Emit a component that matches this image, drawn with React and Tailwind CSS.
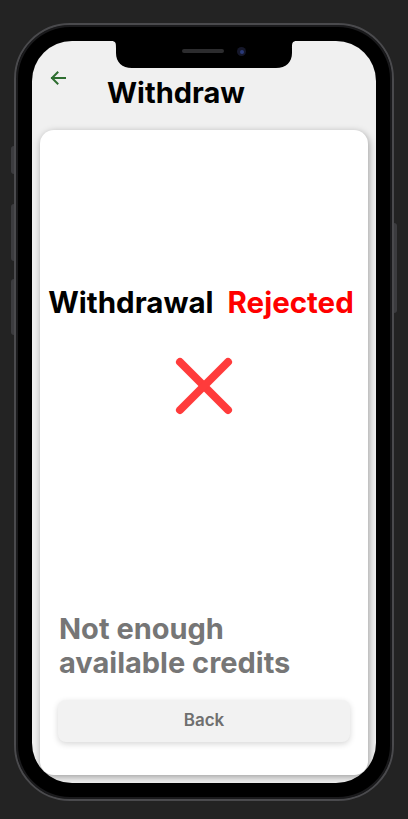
import React from 'react';

// 刘海（含肩部弧线）
const Notch = () => (
    <div className="absolute top-0 left-[79px] w-[186px] h-[28px]">
        <svg width="186" height="28" viewBox="0 0 186 28" className="absolute inset-0">
            <path d="M0 0 C5 0 5 2 5 8 V12 C5 21 11 27 21 27 H165 C175 27 181 21 181 12 V8 C181 2 181 0 186 0 Z" fill="#000" />
        </svg>
        <div className="absolute top-[8px] left-[71px] w-[42px] h-[4px] rounded-full bg-[#2c2c2e]" />
        <div className="absolute top-[6px] left-[126px] w-[9px] h-[9px] rounded-full bg-[#15172a] flex items-center justify-center">
            <div className="w-[4px] h-[4px] rounded-full bg-[#2a3a7a]" />
        </div>
    </div>
);

const BackArrow = () => (
    <svg width="16" height="14" viewBox="0 0 16 14" fill="none" stroke="#2e6e30" strokeWidth="2" strokeLinecap="square">
        <path d="M15 7 H2" />
        <path d="M7.5 1.5 L2 7 L7.5 12.5" />
    </svg>
);

const RejectIcon = () => (
    <svg width="58" height="58" viewBox="0 0 58 58" fill="none" stroke="#ff3b3b" strokeWidth="8" strokeLinecap="round">
        <path d="M5 5 L53 53" />
        <path d="M53 5 L5 53" />
    </svg>
);

const App = () => {
    return (
        <div className="w-[408px] h-[819px] bg-[#232323] pt-[23px] pl-[14px]" style={{ fontFamily: 'Inter, "Noto Sans", sans-serif' }}>
            <div className="relative w-[380px] h-[778px] rounded-[56px] border-[2px] border-[#4a4a4d] bg-black p-[16px] shadow-[inset_0_0_0_2px_#1a1a1c]">
                {/* 侧边按键 */}
                <div className="absolute left-[-5px] top-[121px] w-[3px] h-[28px] rounded-l bg-[#3c3c3f]" />
                <div className="absolute left-[-5px] top-[179px] w-[3px] h-[57px] rounded-l bg-[#3c3c3f]" />
                <div className="absolute left-[-5px] top-[254px] w-[3px] h-[56px] rounded-l bg-[#3c3c3f]" />
                <div className="absolute right-[-5px] top-[198px] w-[3px] h-[90px] rounded-r bg-[#3c3c3f]" />

                <div className="relative w-full h-full rounded-[40px] overflow-hidden bg-[#f0f0f0] flex flex-col">
                    <Notch />

                    <div className="flex items-start h-[89px] shrink-0">
                        <div className="ml-[18px] mt-[30px]">
                            <BackArrow />
                        </div>
                        <h1 className="ml-[41px] mt-[37px] text-[29px] leading-none font-bold text-black">Withdraw</h1>
                    </div>

                    <div className="flex-1 mx-[8px] mb-[8px] rounded-[14px] bg-white shadow-[1px_2px_7px_rgba(0,0,0,0.35)] flex flex-col">
                        <div className="mt-[158px] pr-[6px] flex justify-center gap-[14px] text-[29.5px] leading-none font-bold">
                            <span className="text-black">Withdrawal</span>
                            <span className="text-[#ff0000]">Rejected</span>
                        </div>
                        <div className="mt-[39px] flex justify-center">
                            <RejectIcon />
                        </div>
                        <div className="flex-1" />
                        <p className="px-[19px] text-[29px] leading-[34px] font-bold text-[#767676]">
                            Not enough<br />available credits
                        </p>
                        <button className="mt-[20px] mb-[33px] mx-[18px] h-[42px] rounded-[8px] bg-[#f2f2f2] shadow-[0_2px_6px_rgba(0,0,0,0.16)] text-[17px] font-semibold text-[#6f6f6f]">
                            Back
                        </button>
                    </div>
                </div>
            </div>
        </div>
    );
};

export default App;
